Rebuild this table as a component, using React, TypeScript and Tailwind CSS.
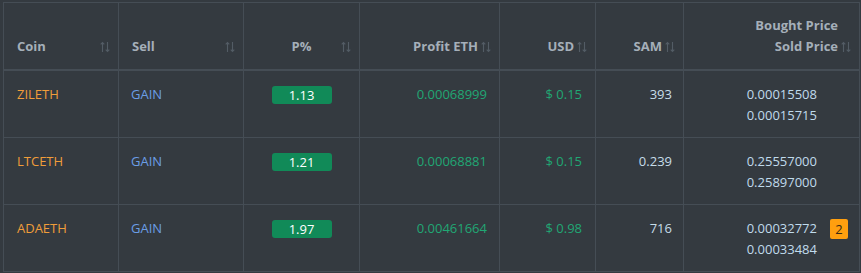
import React from "react";

type Row = {
  coin: string;
  sell: string;
  p: string;
  profit: string;
  usd: string;
  sam: string;
  bought: string;
  sold: string;
  badge?: string;
};

const rows: Row[] = [
  { coin: "ZILETH", sell: "GAIN", p: "1.13", profit: "0.00068999", usd: "$ 0.15", sam: "393", bought: "0.00015508", sold: "0.00015715" },
  { coin: "LTCETH", sell: "GAIN", p: "1.21", profit: "0.00068881", usd: "$ 0.15", sam: "0.239", bought: "0.25557000", sold: "0.25897000" },
  { coin: "ADAETH", sell: "GAIN", p: "1.97", profit: "0.00461664", usd: "$ 0.98", sam: "716", bought: "0.00032772", sold: "0.00033484", badge: "2" },
];

function SortIcon() {
  return (
    <span className="absolute right-[7px] bottom-[12px] flex h-[21px] items-center">
      <svg width="12" height="12" viewBox="0 0 12 12" fill="none" stroke="#535c65" strokeWidth="1.1">
        <path d="M3.5 11V1.5M1.7 3.3L3.5 1.5L5.3 3.3" />
        <path d="M8.5 1V10.5M6.7 8.7L8.5 10.5L10.3 8.7" />
      </svg>
    </span>
  );
}

function Th({ children, align, w }: { children: React.ReactNode; align: "left" | "right" | "center"; w: string }) {
  const a =
    align === "left" ? "text-left pl-[13px] pr-[20px]" : align === "right" ? "text-right pl-[12px] pr-[21px]" : "text-center px-[20px]";
  return (
    <th className={`relative ${w} ${a} align-bottom pb-[12px] pt-[12px] border border-[#454d55] border-b-2 font-bold text-[#a5afb9] leading-[21px]`}>
      {children}
      <SortIcon />
    </th>
  );
}

const td = "border border-[#454d55] align-top pt-[13px] leading-[21px]";

export default function App() {
  return (
    <div
      className="w-[861px] h-[273px] bg-[#343a40] pl-[3px] pt-[2px] overflow-hidden"
      style={{ fontFamily: '"Open Sans", "Noto Sans", sans-serif' }}
    >
      <table className="w-[856px] border-collapse text-[13px] table-fixed">
        <thead>
          <tr className="h-[67px]">
            <Th align="left" w="w-[115px]">Coin</Th>
            <Th align="left" w="w-[125px]">Sell</Th>
            <Th align="center" w="w-[116px]">P%</Th>
            <Th align="right" w="w-[140px]">Profit ETH</Th>
            <Th align="right" w="w-[96px]">USD</Th>
            <Th align="right" w="w-[88px]">SAM</Th>
            <Th align="right" w="w-[176px]">
              <div>Bought Price</div>
              <div>Sold Price</div>
            </Th>
          </tr>
        </thead>
        <tbody>
          {rows.map((r) => (
            <tr key={r.coin} className="h-[67px]">
              <td className={`${td} pl-[13px] text-[#f09d3a]`}>{r.coin}</td>
              <td className={`${td} pl-[12px] text-[#6b9ee6]`}>{r.sell}</td>
              <td className={`${td} text-center`}>
                <span className="inline-block w-[60px] h-[18px] leading-[18px] rounded-[3px] bg-[#118a58] text-white text-[13px] mt-[2px] align-top">
                  {r.p}
                </span>
              </td>
              <td className={`${td} pr-[12px] text-right text-[#21a774]`}>{r.profit}</td>
              <td className={`${td} pr-[13px] text-right text-[#21a774]`}>{r.usd}</td>
              <td className={`${td} pr-[11px] text-right text-[#c6dde9]`}>{r.sam}</td>
              <td className={`${td} pb-[11px] pr-[11px] text-[#c0dbec]`}>
                <div className="flex justify-end">
                  <div>
                    <div>{r.bought}</div>
                    <div>{r.sold}</div>
                  </div>
                  <div className="w-[18px] ml-[13px] pt-[1px]">
                    {r.badge && (
                      <span className="block w-[18px] h-[20px] leading-[20px] rounded-[2px] bg-[#ff9f0f] text-[#3b2a12] text-center text-[13px]">
                        {r.badge}
                      </span>
                    )}
                  </div>
                </div>
              </td>
            </tr>
          ))}
        </tbody>
      </table>
    </div>
  );
}
